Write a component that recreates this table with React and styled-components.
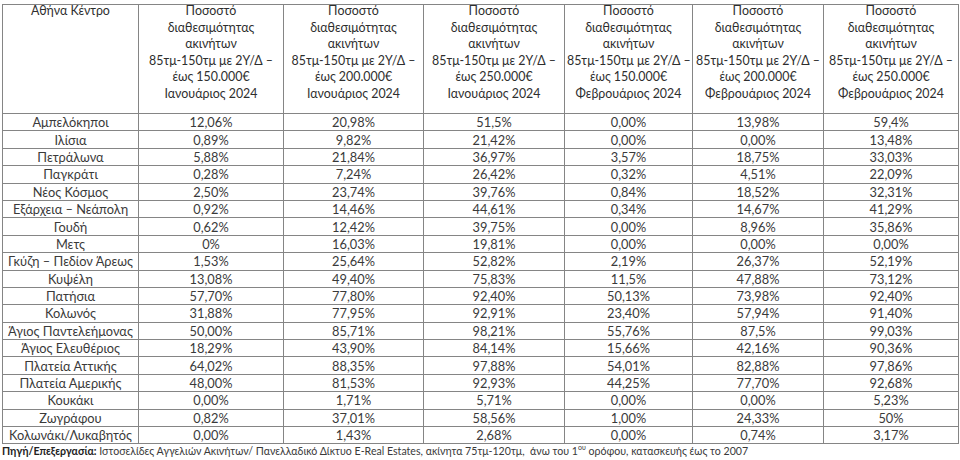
import React from 'react'
import styled, { createGlobalStyle } from 'styled-components'

const GlobalStyle = createGlobalStyle`
  html, body {
    margin: 0;
    padding: 0;
    background: #ffffff;
  }
  body {
    font-family: Lato, "Noto Sans", "Open Sans", sans-serif;
    color: #333333;
  }
`

const Page = styled.div`
  width: 960px;
  height: 460px;
  padding: 4px 0 0 2px;
  box-sizing: border-box;
  overflow: hidden;
`

const Table = styled.table`
  border-collapse: collapse;
  table-layout: fixed;
  width: 956px;
  font-size: 12.8px;
`

const HeadCell = styled.th`
  border: 1px solid #858585;
  font-weight: normal;
  font-size: 12.4px;
  vertical-align: top;
  text-align: center;
  height: 108px;
  padding: 0 2px;
  color: #2e2e2e;
  white-space: nowrap;
`

const HeadText = styled.div`
  margin-top: -2px;
  line-height: 16.6px;
`

const Cell = styled.td`
  border: 1px solid #858585;
  text-align: center;
  height: 16.4px;
  line-height: 16px;
  padding: 0;
  white-space: nowrap;
  color: #3a3a3a;
`

const Source = styled.p`
  margin: 0;
  padding-top: 1px;
  font-size: 10.6px;
  line-height: 13px;
  color: #3a3a3a;
  white-space: nowrap;
`

const Label = styled.b`
  color: #222222;
`

const Sup = styled.sup`
  font-size: 7px;
  line-height: 0;
`

const widths = [136, 145, 140, 141, 128, 131, 135]

const periods = [
  ['150.000€', 'Ιανουάριος 2024'],
  ['200.000€', 'Ιανουάριος 2024'],
  ['250.000€', 'Ιανουάριος 2024'],
  ['150.000€', 'Φεβρουάριος 2024'],
  ['200.000€', 'Φεβρουάριος 2024'],
  ['250.000€', 'Φεβρουάριος 2024'],
]

const rows = [
  ['Αμπελόκηποι', '12,06%', '20,98%', '51,5%', '0,00%', '13,98%', '59,4%'],
  ['Ιλίσια', '0,89%', '9,82%', '21,42%', '0,00%', '0,00%', '13,48%'],
  ['Πετράλωνα', '5,88%', '21,84%', '36,97%', '3,57%', '18,75%', '33,03%'],
  ['Παγκράτι', '0,28%', '7,24%', '26,42%', '0,32%', '4,51%', '22,09%'],
  ['Νέος Κόσμος', '2,50%', '23,74%', '39,76%', '0,84%', '18,52%', '32,31%'],
  ['Εξάρχεια – Νεάπολη', '0,92%', '14,46%', '44,61%', '0,34%', '14,67%', '41,29%'],
  ['Γουδή', '0,62%', '12,42%', '39,75%', '0,00%', '8,96%', '35,86%'],
  ['Μετς', '0%', '16,03%', '19,81%', '0,00%', '0,00%', '0,00%'],
  ['Γκύζη – Πεδίον Άρεως', '1,53%', '25,64%', '52,82%', '2,19%', '26,37%', '52,19%'],
  ['Κυψέλη', '13,08%', '49,40%', '75,83%', '11,5%', '47,88%', '73,12%'],
  ['Πατήσια', '57,70%', '77,80%', '92,40%', '50,13%', '73,98%', '92,40%'],
  ['Κολωνός', '31,88%', '77,95%', '92,91%', '23,40%', '57,94%', '91,40%'],
  ['Άγιος Παντελεήμονας', '50,00%', '85,71%', '98,21%', '55,76%', '87,5%', '99,03%'],
  ['Άγιος Ελευθέριος', '18,29%', '43,90%', '84,14%', '15,66%', '42,16%', '90,36%'],
  ['Πλατεία Αττικής', '64,02%', '88,35%', '97,88%', '54,01%', '82,88%', '97,86%'],
  ['Πλατεία Αμερικής', '48,00%', '81,53%', '92,93%', '44,25%', '77,70%', '92,68%'],
  ['Κουκάκι', '0,00%', '1,71%', '5,71%', '0,00%', '0,00%', '5,23%'],
  ['Ζωγράφου', '0,82%', '37,01%', '58,56%', '1,00%', '24,33%', '50%'],
  ['Κολωνάκι/Λυκαβητός', '0,00%', '1,43%', '2,68%', '0,00%', '0,74%', '3,17%'],
]

const HeaderText = ({ price, month }) => (
  <HeadText>
    Ποσοστό<br />
    διαθεσιμότητας<br />
    ακινήτων<br />
    85τμ-150τμ με 2Υ/Δ –<br />
    έως {price}<br />
    {month}
  </HeadText>
)

export default function App() {
  return (
    <Page>
      <GlobalStyle />
      <Table>
        <colgroup>
          {widths.map((w, i) => <col key={i} style={{ width: w }} />)}
        </colgroup>
        <thead>
          <tr>
            <HeadCell><HeadText>Αθήνα Κέντρο</HeadText></HeadCell>
            {periods.map(([price, month], i) => (
              <HeadCell key={i}>
                <HeaderText price={price} month={month} />
              </HeadCell>
            ))}
          </tr>
        </thead>
        <tbody>
          {rows.map(row => (
            <tr key={row[0]}>
              {row.map((v, i) => <Cell key={i}>{v}</Cell>)}
            </tr>
          ))}
        </tbody>
      </Table>
      <Source>
        <Label>Πηγή/Επεξεργασία:</Label> Ιστοσελίδες Αγγελιών Ακινήτων/ Πανελλαδικό Δίκτυο E-Real Estates, ακίνητα 75τμ-120τμ,&nbsp; άνω του 1<Sup>ου</Sup> ορόφου, κατασκευής έως το 2007
      </Source>
    </Page>
  )
}
